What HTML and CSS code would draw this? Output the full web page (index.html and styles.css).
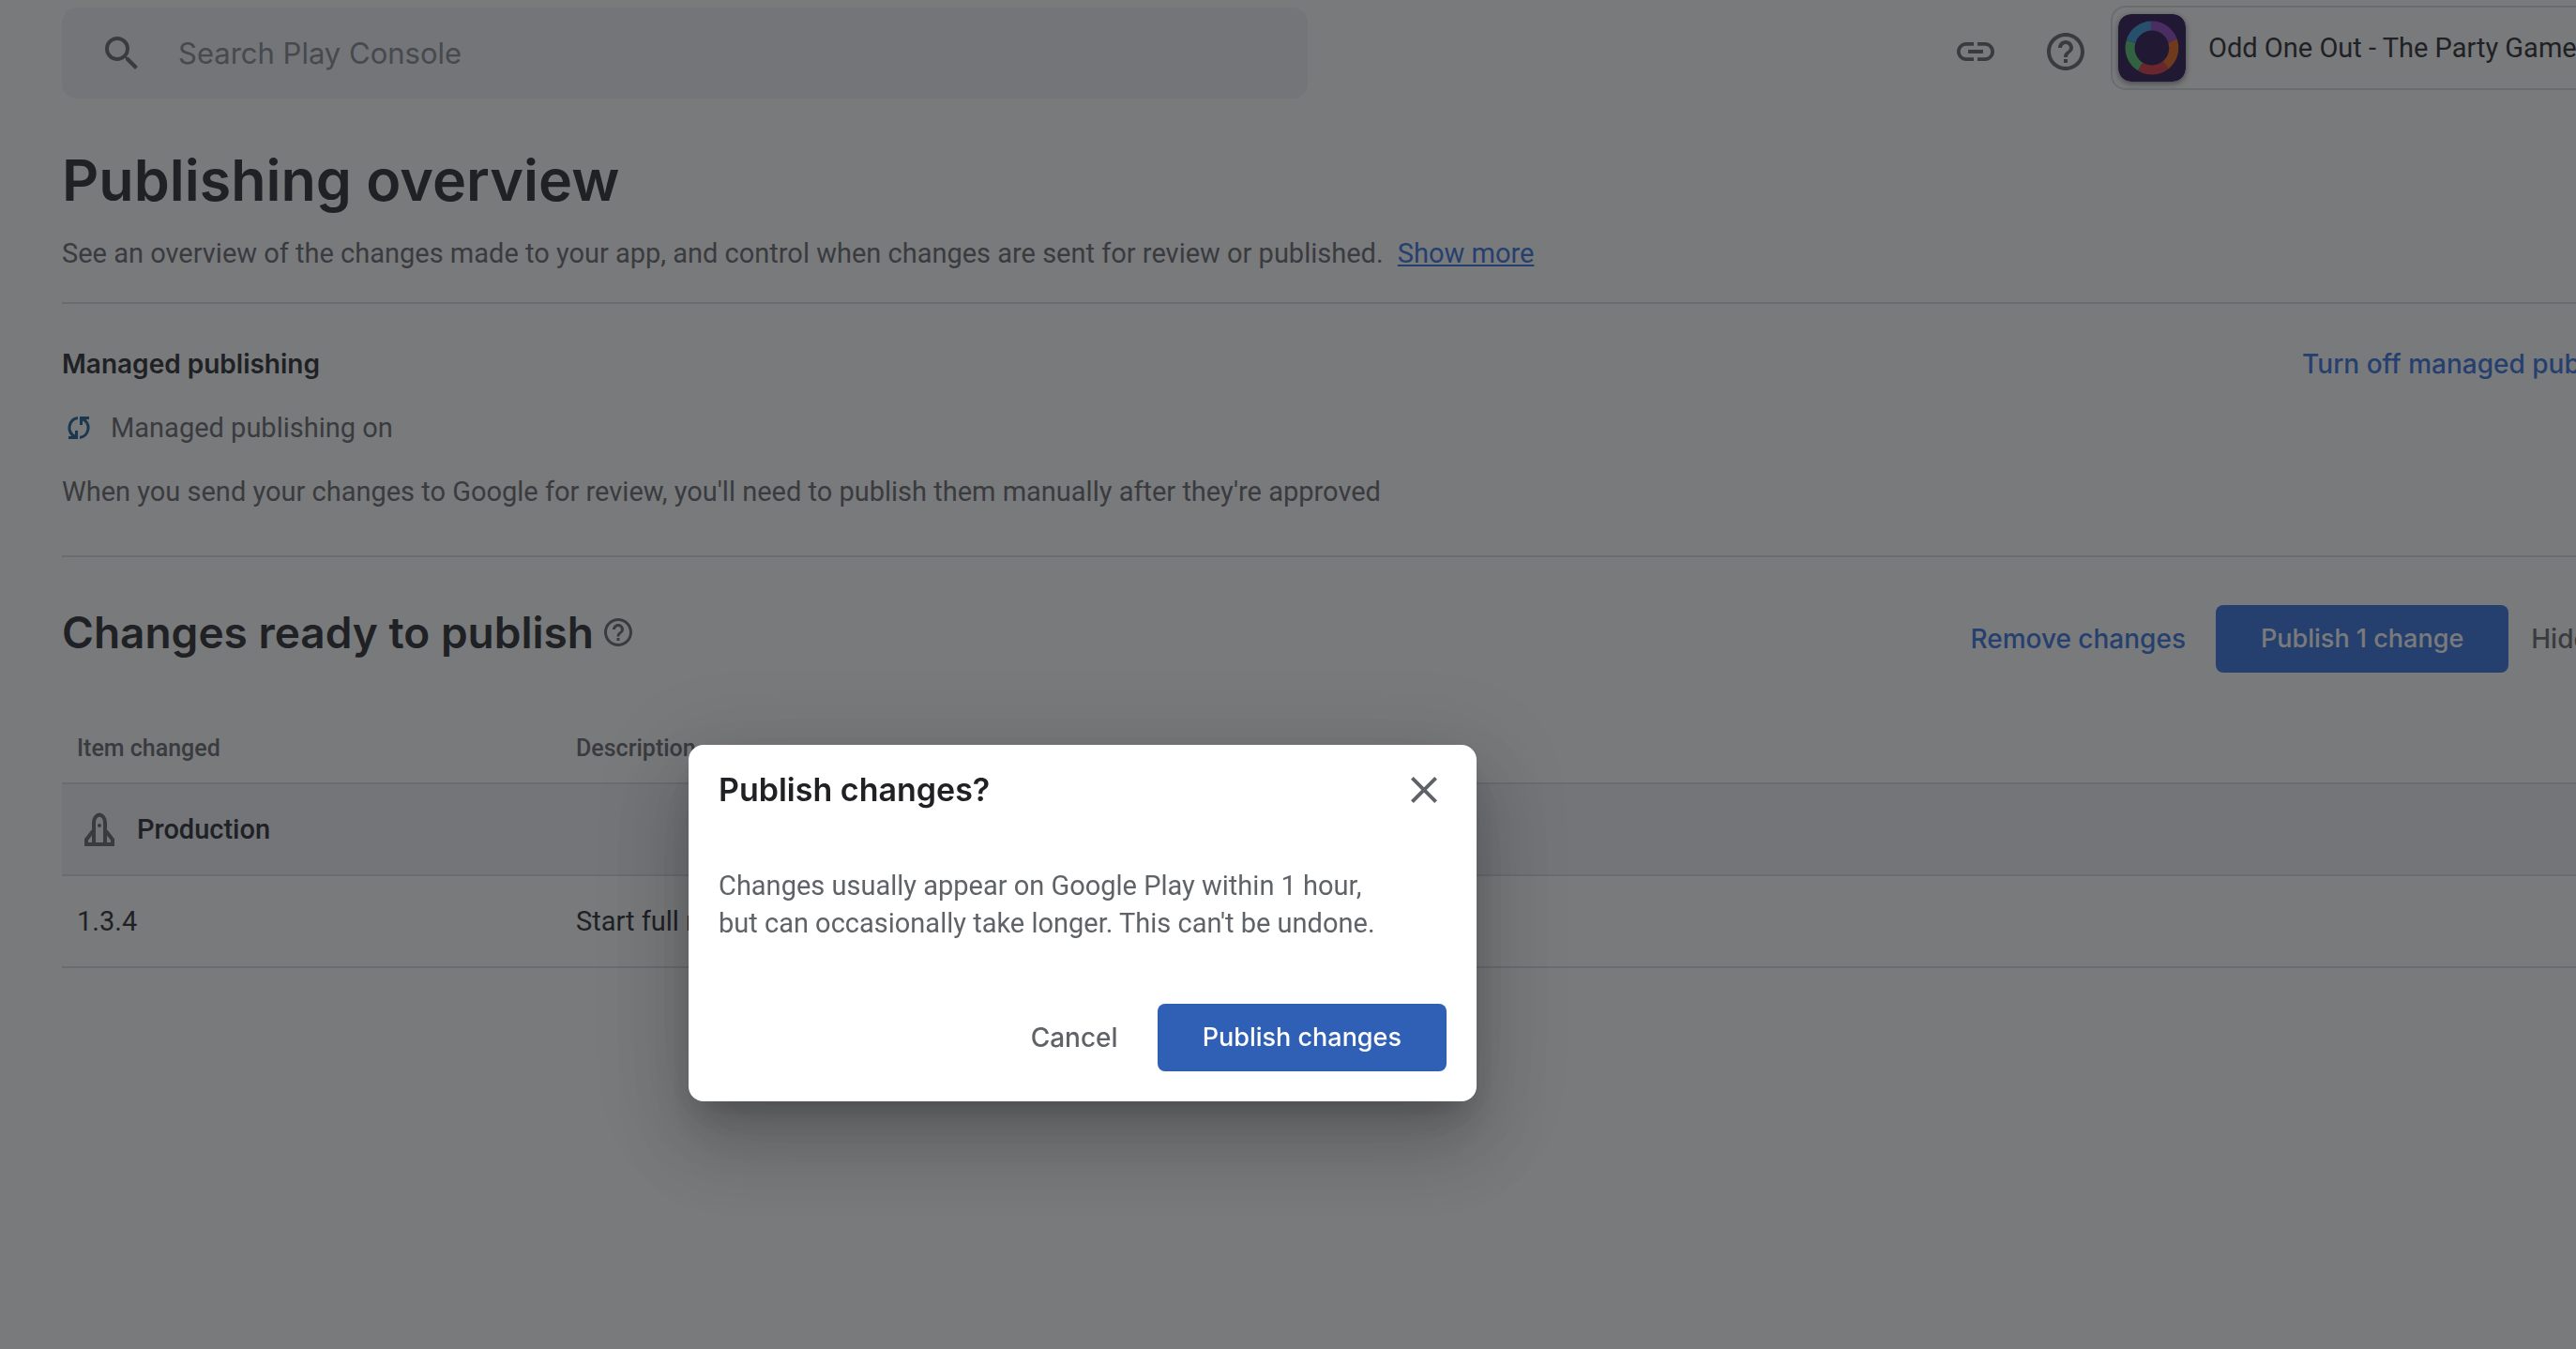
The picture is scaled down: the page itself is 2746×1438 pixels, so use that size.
FILE: index.html
```html
<!DOCTYPE html>
<html lang="en">
<head>
<meta charset="utf-8">
<title>Publishing overview</title>
<link rel="stylesheet" href="styles.css">
</head>
<body>
<div class="page">
  <header class="topbar">
    <label class="search">
      <svg class="icon" viewBox="0 0 24 24" aria-hidden="true"><path d="M15.5 14h-.79l-.28-.27A6.47 6.47 0 0 0 16 9.500 6.500 6.500 0 1 0 9.500 16c1.610 0 3.090-.59 4.230-1.570l.27.28v.79l5 4.990L20.490 19l-4.990-5zm-6 0C7.010 14 5 11.990 5 9.500S7.010 5 9.500 5 14 7.010 14 9.500 11.990 14 9.500 14z"/></svg>
      <input class="search-input" type="search" placeholder="Search Play Console" aria-label="Search Play Console">
    </label>
    <div class="tools">
      <button class="icon-button" aria-label="Copy link"><svg class="icon" viewBox="0 0 24 24"><path d="M3.900 12c0-1.710 1.390-3.100 3.100-3.100h4V7H7c-2.760 0-5 2.240-5 5s2.240 5 5 5h4v-1.900H7c-1.710 0-3.100-1.390-3.100-3.100zM8 13h8v-2H8v2zm9-6h-4v1.900h4c1.710 0 3.100 1.390 3.100 3.100s-1.390 3.100-3.100 3.100h-4V17h4c2.760 0 5-2.240 5-5s-2.240-5-5-5z"/></svg></button>
      <button class="icon-button" aria-label="Help"><svg class="icon" viewBox="0 0 24 24"><path d="M11 18h2v-2h-2v2zm1-16C6.480 2 2 6.480 2 12s4.480 10 10 10 10-4.480 10-10S17.520 2 12 2zm0 18c-4.410 0-8-3.590-8-8s3.590-8 8-8 8 3.590 8 8-3.590 8-8 8zm0-14c-2.210 0-4 1.790-4 4h2c0-1.100.9-2 2-2s2 .9 2 2c0 2-3 1.750-3 5h2c0-2.250 3-2.500 3-5 0-2.210-1.790-4-4-4z"/></svg></button>
      <button class="app-chip">
        <svg class="app-icon" viewBox="0 0 72 72" aria-hidden="true">
          <rect width="72" height="72" rx="14" fill="#240b49"/>
          <g fill="none" stroke-width="10">
            <path stroke="#8a3fbe" d="M35 12.500A23.500 23.500 0 0 1 58 28.500"/>
            <path stroke="#e85f14" d="M58 28.500A23.500 23.500 0 0 1 50.500 54.500"/>
            <path stroke="#d62f38" d="M50.500 54.500A23.500 23.500 0 0 1 23.500 56"/>
            <path stroke="#52c36c" d="M23.500 56A23.500 23.500 0 0 1 13.500 29.500"/>
            <path stroke="#3196d6" d="M13.500 29.500A23.500 23.500 0 0 1 35 12.500"/>
          </g>
        </svg>
        <span>Odd One Out - The Party Game</span>
      </button>
    </div>
  </header>

  <main>
    <section class="intro">
      <h1>Publishing overview</h1>
      <p>See an overview of the changes made to your app, and control when changes are sent for review or published. <a class="more" href="#more">Show more</a></p>
    </section>

    <section class="managed">
      <div class="managed-head">
        <h2>Managed publishing</h2>
        <button class="text-button">Turn off managed publishing</button>
      </div>
      <p class="status">
        <svg class="sync" viewBox="0 0 24 24" aria-hidden="true"><g fill="none" stroke="currentColor" stroke-width="3"><path d="M11 1.500A10.500 10.500 0 0 0 6.500 20.500"/><path d="M13 22.500A10.500 10.500 0 0 0 17.500 3.500"/></g><path fill="currentColor" d="M1 24h10V15H8v4l-5 2H1zM23 0H13v9h3V5l5-2h2z"/></svg>
        <span>Managed publishing on</span>
      </p>
      <p>When you send your changes to Google for review, you'll need to publish them manually after they're approved</p>
    </section>

    <section class="changes">
      <div class="changes-head">
        <h2>Changes ready to publish</h2>
        <button class="help-small" aria-label="About changes ready to publish"><svg viewBox="0 0 24 24"><path d="M11 18h2v-2h-2v2zm1-16C6.480 2 2 6.480 2 12s4.480 10 10 10 10-4.480 10-10S17.520 2 12 2zm0 18c-4.410 0-8-3.590-8-8s3.590-8 8-8 8 3.590 8 8-3.590 8-8 8zm0-14c-2.210 0-4 1.790-4 4h2c0-1.100.9-2 2-2s2 .9 2 2c0 2-3 1.750-3 5h2c0-2.250 3-2.500 3-5 0-2.210-1.790-4-4-4z"/></svg></button>
        <div class="actions">
          <button class="text-button">Remove changes</button>
          <button class="primary">Publish 1 change</button>
          <button class="text-button muted">Hide changes</button>
        </div>
      </div>
      <table>
        <thead>
          <tr><th class="col-item" scope="col">Item changed</th><th scope="col">Description</th></tr>
        </thead>
        <tbody>
          <tr class="group"><th colspan="2" scope="rowgroup"><span class="group-name"><svg class="rocket" viewBox="0 0 32 36" aria-hidden="true"><path fill="none" stroke="currentColor" stroke-width="4" d="M10 34V11C10 6 13 3 16 2.500C19 3 22 6 22 11V34M9 20L2 29V34H30V29L23 20"/><circle cx="16" cy="14" r="2" fill="currentColor"/></svg>Production</span></th></tr>
          <tr><td>1.3.4</td><td>Start full rollout</td></tr>
        </tbody>
      </table>
    </section>
  </main>
</div>

<div class="scrim"></div>
<div class="dialog" role="dialog" aria-modal="true" aria-labelledby="dialog-title">
  <div class="dialog-head">
    <h2 id="dialog-title">Publish changes?</h2>
    <button class="icon-button" aria-label="Close"><svg class="icon" viewBox="0 0 24 24"><path d="M19 6.410L17.590 5 12 10.590 6.410 5 5 6.410 10.590 12 5 17.590 6.410 19 12 13.410 17.590 19 19 17.590 13.410 12z"/></svg></button>
  </div>
  <p>Changes usually appear on Google Play within 1 hour,<br>but can occasionally take longer. This can't be undone.</p>
  <div class="dialog-actions">
    <button class="text-button muted">Cancel</button>
    <button class="primary focused">Publish changes</button>
  </div>
</div>
</body>
</html>
```
FILE: styles.css
```css
* { box-sizing: border-box; }

html { overflow: hidden; }

body {
  margin: 0;
  background: #fff;
  color: #5f6368;
  font: 400 29px/40px Roboto, "Liberation Sans", sans-serif;
}

h1, h2, p { margin: 0; }

h1, h2, .search-input, .text-button, .primary {
  font-family: "Google Sans", Inter, sans-serif;
}

h1, h2 { color: #202124; font-weight: 600; }

button {
  margin: 0;
  padding: 0;
  border: 0;
  background: none;
  color: inherit;
  font: inherit;
  cursor: pointer;
}

svg { display: block; flex: none; fill: currentColor; }

.icon { width: 48px; height: 48px; }

/* The content is wider than the window and runs off its right side. */
.page {
  width: calc(100% + 136px);
  padding: 8px 0 0 66px;
}

.topbar {
  display: flex;
  justify-content: space-between;
  height: 98px;
}

.search {
  display: flex;
  align-items: center;
  width: 48%;
  max-width: 1328px;
  height: 97px;
  padding-left: 40px;
  gap: 36px;
  border-radius: 16px;
  background: #eff2f7;
}

.search-input {
  flex: 1;
  padding: 0;
  border: 0;
  outline: 0;
  background: none;
  color: #202124;
  font-size: 31px;
}

.search-input::placeholder { color: #80868b; opacity: 1; }

.tools { display: flex; align-items: center; gap: 48px; height: 94px; }

.app-chip {
  display: flex;
  align-items: center;
  gap: 24px;
  width: 632px;
  height: 90px;
  margin: 0 0 8px -24px;
  padding-left: 6px;
  border: 2px solid #dadce0;
  border-radius: 16px;
  color: #202124;
}

.app-icon {
  width: 72px;
  height: 72px;
  border-radius: 14px;
  box-shadow: 0 2px 6px rgba(0, 0, 0, .5);
}

.intro {
  padding: 48px 0 32px;
  border-bottom: 2px solid #dadce0;
}

h1 { margin-bottom: 20px; font-size: 61px; line-height: 76px; }

.more { margin-left: 8px; color: #2f6ddb; }

.managed {
  display: grid;
  gap: 28px;
  padding: 44px 0 48px;
  border-bottom: 2px solid #dadce0;
}

.managed-head { display: flex; justify-content: space-between; padding-right: 44px; }

.managed-head h2 { font-size: 28px; }

.text-button { color: #2f6ddb; font-size: 28px; font-weight: 500; }

.muted { color: #5f6368; }

.status { display: flex; align-items: center; gap: 22px; padding-left: 6px; }

.sync { width: 24px; height: 24px; color: #185a90; }

.changes { padding-top: 50px; }

.changes-head { display: flex; height: 74px; }

.changes-head h2 { font-size: 46px; line-height: 60px; }

.help-small { margin-left: 8px; width: 36px; height: 60px; }

.actions { display: flex; align-items: center; gap: 32px; margin-left: auto; }

.primary {
  height: 72px;
  padding: 0 48px;
  border-radius: 8px;
  background: #2f6ddb;
  color: #fff;
  font-size: 27px;
  font-weight: 500;
}

.focused { background: #3060b5; }

.actions .muted { margin-left: -8px; }

table { width: 100%; margin-top: 42px; border-collapse: separate; border-spacing: 0; }

th, td { height: 98px; padding: 0 16px; border-bottom: 2px solid #dadce0; text-align: left; }

td { color: #202124; }

thead th { height: 76px; padding-top: 2px; font-size: 25px; font-weight: 500; }

.col-item { width: 532px; }

.group th { background: #eff2f7; color: #202124; font-weight: 500; }

.group-name { display: flex; align-items: center; gap: 24px; padding-left: 8px; }

.rocket { width: 32px; height: 36px; color: #5f6368; }

.scrim { position: fixed; inset: 0; background: rgba(32, 33, 36, .6); }

.dialog {
  position: fixed;
  left: 734px;
  top: 794px;
  width: 840px;
  padding: 24px 32px 32px;
  border-radius: 16px;
  background: #fff;
  box-shadow:
    0 22px 30px -14px rgba(0, 0, 0, .2),
    0 48px 76px 6px rgba(0, 0, 0, .14),
    0 18px 92px 16px rgba(0, 0, 0, .12);
}

.dialog-head { display: flex; justify-content: space-between; margin-bottom: 58px; }

.dialog-head h2 { font-size: 34px; line-height: 48px; }

.dialog-actions { display: flex; justify-content: flex-end; gap: 42px; margin-top: 66px; }
```
